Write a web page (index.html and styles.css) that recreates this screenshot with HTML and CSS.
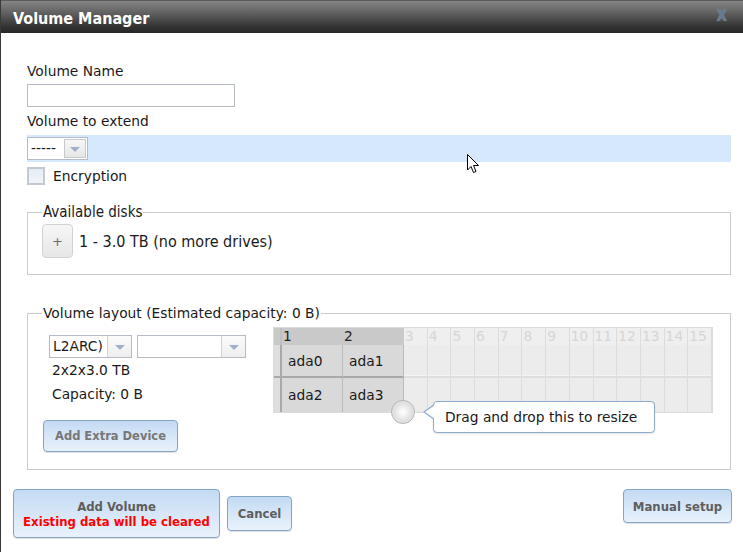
FILE: index.html
```html
<!DOCTYPE html>
<html>
<head>
<meta charset="utf-8">
<link rel="stylesheet" href="styles.css">
</head>
<body>
<div class="dialog">
  <div class="titlebar">
    <span class="title">Volume Manager</span>
    <span class="close">X</span>
  </div>
  <div class="body">
    <div class="label">Volume Name</div>
    <div class="textinput"></div>
    <div class="label label-extend">Volume to extend</div>
    <div class="band">
      <div class="select sel-vol"><span class="sel-text">-----</span><span class="sel-arrow boxed"></span></div>
    </div>
    <div class="check-row"><span class="checkbox"></span><span>Encryption</span></div>

    <fieldset class="fs fs-disks">
      <legend class="legend-cond">Available disks</legend>
      <div class="disk-row">
        <span class="plus-btn">+</span>
        <span class="disk-text">1 - 3.0 TB (no more drives)</span>
      </div>
    </fieldset>

    <fieldset class="fs fs-layout">
      <legend>Volume layout (Estimated capacity: 0 B)</legend>
      <div class="layout">
        <div class="layout-left">
          <div class="sel-row">
            <div class="select sel-type"><span class="sel-text">L2ARC)</span><span class="sel-arrow"></span></div>
            <div class="select sel-empty"><span class="sel-text"></span><span class="sel-arrow"></span></div>
          </div>
          <div class="info">2x2x3.0 TB</div>
          <div class="info">Capacity: 0 B</div>
          <div class="btn btn-extra">Add Extra Device</div>
        </div>
        <div class="grid-wrap">
          <div class="grid">
            <div class="c strip hd"></div>
            <div class="c hd on">1</div>
            <div class="c hd on">2</div>
            <div class="c hd">3</div><div class="c hd">4</div><div class="c hd">5</div><div class="c hd">6</div><div class="c hd">7</div><div class="c hd">8</div><div class="c hd">9</div><div class="c hd">10</div><div class="c hd">11</div><div class="c hd">12</div><div class="c hd">13</div><div class="c hd">14</div><div class="c hd">15</div>

            <div class="c strip r1"></div>
            <div class="c on r1">ada0</div>
            <div class="c on r1">ada1</div>
            <div class="c r1"></div><div class="c r1"></div><div class="c r1"></div><div class="c r1"></div><div class="c r1"></div><div class="c r1"></div><div class="c r1"></div><div class="c r1"></div><div class="c r1"></div><div class="c r1"></div><div class="c r1"></div><div class="c r1"></div><div class="c r1"></div>

            <div class="c strip r2"></div>
            <div class="c on r2">ada2</div>
            <div class="c on r2">ada3</div>
            <div class="c r2"></div><div class="c r2"></div><div class="c r2"></div><div class="c r2"></div><div class="c r2"></div><div class="c r2"></div><div class="c r2"></div><div class="c r2"></div><div class="c r2"></div><div class="c r2"></div><div class="c r2"></div><div class="c r2"></div><div class="c r2"></div>
          </div>
          <div class="handle"></div>
          <div class="tooltip">Drag and drop this to resize</div>
        </div>
      </div>
    </fieldset>
  </div>

  <div class="actions">
    <div class="actions-left">
      <div class="btn btn-add">Add Volume<br><span class="warn">Existing data will be cleared</span></div>
      <div class="btn btn-cancel">Cancel</div>
    </div>
    <div class="btn btn-manual">Manual setup</div>
  </div>

  <svg class="cursor" width="13" height="20" viewBox="0 0 13 20">
    <path d="M0.5 0.5 L0.5 16 L4 12.5 L6.5 18.5 L9 17.5 L6.5 11.5 L11.5 11.5 Z" fill="#fff" stroke="#000" stroke-width="1" stroke-linejoin="miter"/>
  </svg>
</div>
</body>
</html>
```

FILE: styles.css
```css
html, body {
  margin: 0;
  padding: 0;
  background: #fff;
}
body {
  font-family: "DejaVu Sans", Verdana, sans-serif;
  font-size: 13.8px;
  color: #1a1a1a;
}
.dialog {
  position: relative;
  width: 742px;
  height: 552px;
  border-left: 1px solid #3a3a3a;
  overflow: hidden;
}
.titlebar {
  height: 33px;
  box-sizing: border-box;
  border-top: 1px solid #5a5a5a;
  background: linear-gradient(#858585 0%, #5e5e5e 40%, #333 80%, #262626 100%);
  display: flex;
  align-items: center;
  padding: 0 16px 0 12px;
}
.title {
  margin-top: 2px;
  font-family: "DejaVu Sans Condensed", "DejaVu Sans", sans-serif;
  font-stretch: condensed;
  font-weight: bold;
  font-size: 16px;
  color: #fff;
}
.close {
  margin-left: auto;
  margin-top: -3px;
  font-family: "DejaVu Sans Condensed", "DejaVu Sans", sans-serif;
  font-stretch: condensed;
  font-weight: bold;
  font-size: 15px;
  color: #66798f;
  text-shadow: 0 0 1px #8ea0b4;
}
.body {
  padding: 30px 12px 0 26px;
}
.label {
  line-height: 16px;
}
.textinput {
  margin-top: 5px;
  width: 208px;
  height: 23px;
  box-sizing: border-box;
  border: 1px solid #b5bcc7;
  background: #fff;
}
.label-extend {
  margin-top: 6px;
}
.band {
  margin-top: 6px;
  height: 27px;
  box-sizing: border-box;
  padding-top: 2px;
  background: #d5e8fc;
}
.select {
  display: inline-flex;
  height: 23px;
  box-sizing: border-box;
  border: 1px solid #b5bcc7;
  background: #fff;
  vertical-align: top;
}
.sel-text {
  flex: 1;
  padding: 0 3px;
  line-height: 21px;
  white-space: nowrap;
  overflow: hidden;
}
.sel-arrow {
  position: relative;
  width: 23px;
  border-left: 1px solid #d0d4da;
  background: linear-gradient(#fbfbfb, #eeeeee);
}
.sel-arrow::after {
  content: "";
  position: absolute;
  left: 50%;
  top: 50%;
  margin-left: -5px;
  margin-top: -2px;
  border-left: 5px solid transparent;
  border-right: 5px solid transparent;
  border-top: 5px solid #9fb1c9;
}
.sel-arrow.boxed {
  border: 1px solid #c6c9ce;
  margin: 1px;
  width: 20px;
  background: linear-gradient(#f7f7f7, #e6e6e6);
}
.sel-vol {
  width: 61px;
}
.check-row {
  margin-top: 4px;
  height: 20px;
  display: flex;
  align-items: center;
  gap: 8px;
}
.checkbox {
  width: 18px;
  height: 18px;
  box-sizing: border-box;
  border: 2px solid #c3c8ce;
  background: linear-gradient(#e4ecf5, #f1f5fa);
}
.fs {
  margin: 0;
  border: 1px solid #cccccc;
  padding: 0 14px;
  min-width: 0;
}
.fs legend {
  padding: 0 1px;
  line-height: 18px;
}
.legend-cond {
  font-family: "DejaVu Sans Condensed", "DejaVu Sans", sans-serif;
  font-stretch: condensed;
  font-size: 15px;
}
.fs-disks {
  margin-top: 17px;
  padding-bottom: 16px;
}
.disk-row {
  margin-top: 3px;
  display: flex;
  align-items: center;
  gap: 6px;
}
.plus-btn {
  width: 31px;
  height: 34px;
  box-sizing: border-box;
  border: 1px solid #d2d2d2;
  border-radius: 4px;
  background: linear-gradient(#f6f6f6, #e6e6e6);
  color: #6a6a6a;
  display: flex;
  align-items: center;
  justify-content: center;
  font-size: 13px;
}
.disk-text {
  font-family: "DejaVu Sans Condensed", "DejaVu Sans", sans-serif;
  font-stretch: condensed;
  font-size: 16px;
}
.fs-layout {
  margin-top: 29px;
  padding-bottom: 17px;
}
.layout {
  margin-top: 5px;
  display: flex;
  align-items: flex-start;
}
.layout-left {
  width: 231px;
  padding-top: 8px;
}
.sel-row {
  margin-left: 7px;
  display: flex;
  gap: 5px;
}
.sel-type {
  width: 83px;
}
.sel-empty {
  width: 109px;
}
.info {
  padding-left: 10px;
  line-height: 24px;
}
.btn {
  box-sizing: border-box;
  border: 1px solid #86a4c4;
  border-radius: 4px;
  background: linear-gradient(#c3daf3, #e9f2fc);
  box-shadow: 0 1px 1px rgba(0,0,0,0.12);
  color: #5e5e5e;
  font-family: "DejaVu Sans Condensed", "DejaVu Sans", sans-serif;
  font-stretch: condensed;
  font-weight: bold;
  font-size: 13px;
  display: flex;
  align-items: center;
  justify-content: center;
  text-align: center;
}
.btn-extra {
  margin-top: 14px;
  margin-left: 1px;
  width: 135px;
  height: 32px;
  font-family: "DejaVu Sans", Verdana, sans-serif;
  font-stretch: normal;
  font-size: 11.5px;
  color: #777;
}
.grid-wrap {
  position: relative;
}
.grid {
  display: grid;
  width: 440px;
  box-sizing: border-box;
  grid-template-columns: 8px 61px 61px repeat(13, 1fr);
  grid-template-rows: 17px 33px 34px;
  border: 1px solid #dcdcdc;
  background: #ececec;
}
.c {
  border-right: 1px solid #dcdcdc;
  display: flex;
  align-items: center;
  white-space: nowrap;
  overflow: hidden;
}
.hd {
  background: #efefef;
  color: #d6d6d6;
  padding-left: 1px;
  line-height: 17px;
  align-items: flex-start;
}
.hd.on {
  background: #c9c9c9;
  color: #222;
  border-right-color: #c9c9c9;
}
.strip {
  background: #dedede;
  border-right: 2px solid #a9a9a9;
}
.strip.hd {
  background: #c9c9c9;
  border-right: 2px solid #c0c0c0;
}
.r1 {
  border-bottom: 2px solid #dedede;
  box-shadow: inset 0 -1px 0 #f4f4f4;
}
.r1.on, .r1.strip {
  border-bottom-color: #a9a9a9;
  box-shadow: none;
}
.on {
  background: #d9d9d9;
  padding-left: 6px;
  border-right: 1px solid #bcbcbc;
}
.hd.on {
  padding-left: 1px;
}
.handle {
  position: absolute;
  left: 118px;
  top: 73px;
  width: 24px;
  height: 24px;
  box-sizing: border-box;
  border-radius: 50%;
  border: 1px solid #b4b4b4;
  background: radial-gradient(circle at 50% 50%, #ffffff 0, #f3f3f3 25%, #dedede 60%, #cfcfcf 85%, #c4c4c4 100%);
  box-shadow: inset 0 0 0 1px #e6e6e6;
}
.tooltip {
  position: absolute;
  left: 160px;
  top: 74px;
  width: 222px;
  height: 32px;
  box-sizing: border-box;
  border: 1px solid #8eadcc;
  border-radius: 4px;
  background: #fff;
  padding-left: 11px;
  line-height: 30px;
  white-space: nowrap;
  box-shadow: 0 1px 2px rgba(0,0,0,0.12);
}
.tooltip::before {
  content: "";
  position: absolute;
  left: -11px;
  top: 2px;
  border-top: 8px solid transparent;
  border-bottom: 8px solid transparent;
  border-right: 11px solid #8eadcc;
}
.tooltip::after {
  content: "";
  position: absolute;
  left: -9px;
  top: 3px;
  border-top: 7px solid transparent;
  border-bottom: 7px solid transparent;
  border-right: 10px solid #fff;
}
.actions {
  margin-top: 19px;
  padding: 0 11px 0 12px;
  display: flex;
  justify-content: space-between;
  align-items: flex-start;
}
.actions-left {
  display: flex;
  align-items: center;
  gap: 7px;
}
.btn-add {
  width: 207px;
  height: 49px;
  line-height: 15px;
  flex-direction: column;
}
.warn {
  color: #f00;
  font-size: 13px;
}
.btn-cancel {
  width: 65px;
  height: 35px;
}
.btn-manual {
  width: 109px;
  height: 34px;
}
.cursor {
  position: absolute;
  left: 466px;
  top: 154px;
}
```
